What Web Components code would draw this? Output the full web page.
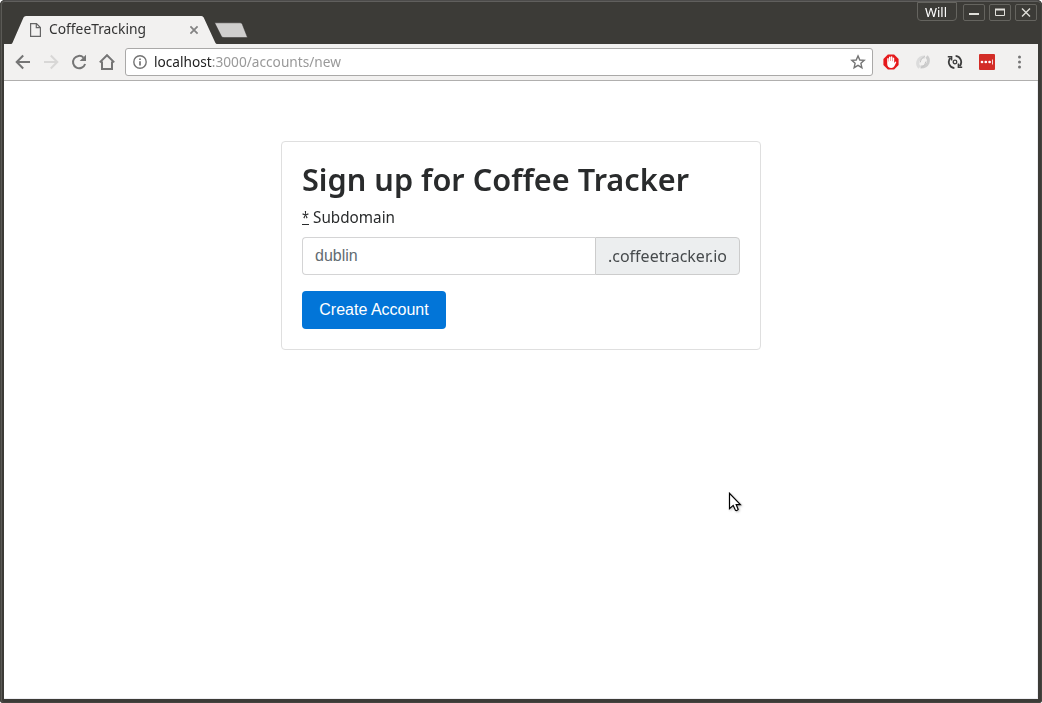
<!DOCTYPE html>
<html lang="en">
<head>
<meta charset="utf-8">
<title>CoffeeTracking</title>
<style>
html,body{margin:0;height:100%;overflow:hidden;background:#fff}
body{font-family:"Noto Sans","Open Sans",sans-serif;color:#292b2c}
</style>
</head>
<body>
<browser-window>
  <window-titlebar slot="top"></window-titlebar>
  <browser-toolbar slot="top"></browser-toolbar>
  <signup-card>
    <fit-text slot="title" width="387">Sign up for Coffee Tracker</fit-text>
  </signup-card>
</browser-window>
<mouse-pointer></mouse-pointer>
<script>
const define = (name, html, setup) => customElements.define(name, class extends HTMLElement {
  constructor() {
    super();
    this.attachShadow({mode: 'open'}).innerHTML = html;
  }
  connectedCallback() { if (setup) setup(this); }
});

define('browser-window', `<style>
:host{display:flex;flex-direction:column;box-sizing:border-box;width:1042px;height:703px;background:#3c3b37;padding:0 4px 4px;border-radius:5px 5px 3px 3px;overflow:hidden;position:relative}
:host::after{content:"";position:absolute;inset:0;border:1px solid #454440;border-top-color:#4c4b4a;border-radius:5px 5px 3px 3px;box-shadow:inset 1px 0 #5b5a56,inset 0 1px #605f5d;pointer-events:none}
main{flex:1;background:#fff;display:flex;justify-content:center;align-items:flex-start;padding-top:60px;box-shadow:inset 0 -1px #eeeef2,inset -1px 0 #eeeef2}
</style><slot name="top"></slot><main><slot></slot></main>`);

define('window-titlebar', `<style>
:host{display:flex;height:44px;background:#3c3b37;margin:0 -4px;padding:0 4px}
.tab{display:flex;align-items:center;position:relative;width:206px;height:28px;margin:16px 0 0 7px;color:#333;font-size:14px}
.tab>svg.bg{position:absolute;left:0;top:0;z-index:0}
.tab>*{position:relative}
.doc{margin-left:19px;flex:none}
.name{margin-left:8px;line-height:26px;margin-top:-3px}
.x{margin-left:43px;flex:none}
.new{margin:22px 0 0 -4px}
.controls{margin-left:auto;display:flex;margin-right:1px}
.user{box-sizing:border-box;width:40px;height:19px;margin-top:2px;border:1px solid #65645f;border-radius:0 0 4px 4px;text-align:center;font-size:13px;line-height:18px;color:#fff;margin-right:6px;padding-right:2px}
.b{box-sizing:border-box;width:22px;height:17px;border:1px solid #65645f;border-radius:2px;margin-top:4px;margin-right:4px;display:flex}
.b:last-child{margin-right:0}
</style>
<div class="tab">
<svg class="bg" width="206" height="28"><path d="M0 28 Q1 28 1.4 27 L12.5 1.5 Q13.2 0 15 0 H190.5 Q192 0 192.7 1.5 L204.2 26.5 Q205 28 206 28Z" fill="#f2f1f0"/></svg>
<svg class="doc" width="11" height="14" fill="none" stroke="#666" stroke-width="1.2"><path d="M.6 .6H6.5L10.4 4.5V13.4H.6ZM6.3 .6V4.7H10.4"/></svg>
<fit-text class="name" width="97">CoffeeTracking</fit-text>
<svg class="x" width="10" height="10" stroke="#838383" stroke-width="1.8"><path d="M1.4 1.4L8.6 8.6M8.6 1.4L1.4 8.6"/></svg>
</div>
<svg class="new" width="36" height="18"><path d="M1.6 .8H27Q28.7 .8 29.3 2.2L34.5 15.6H11Q9 15.6 8.4 14.2Z" fill="#cfcecd" stroke="#32312e" stroke-width=".5"/></svg>
<div class="controls"><div class="user"><fit-text width="22">Will</fit-text></div>
<div class="b"><svg width="20" height="15"><path d="M5 9H15" stroke="#e0dfda" stroke-width="2"/></svg></div>
<div class="b"><svg width="20" height="15"><path d="M5.5 4.5H14.5V10.5H5.5Z" fill="none" stroke="#e0dfda"/><path d="M5 4.5H15" stroke="#e0dfda" stroke-width="2"/></svg></div>
<div class="b"><svg width="20" height="15"><path d="M6 3.5L14 11.5M14 3.5L6 11.5" stroke="#e0dfda" stroke-width="1.4"/></svg></div></div>`);

define('browser-toolbar', `<style>
:host{display:flex;align-items:center;box-sizing:border-box;height:37px;background:#f2f1f0;border-bottom:1px solid #b0afae;padding-left:9px}
svg{display:block;flex:none;margin-right:8px}
.nav{display:flex;flex:none}
.box{box-sizing:border-box;flex:none;display:flex;align-items:center;width:748px;height:28px;border:1px solid #aaa9a8;border-radius:3px;background:#fff;font-size:14px;color:#999;padding-left:7px}
.box svg{margin-right:7px}
.box fit-text{line-height:24px;margin-top:-1px}
b{font-weight:400;color:#222}
.box .star{margin:0 6px 0 auto}
.ext{display:flex;margin-left:10px}
.ext svg{margin-right:16px}
.ext svg:last-child{margin-right:0}
</style>
<div class="nav">
<svg width="20" height="20" viewBox="0 0 20 20" fill="none" stroke="#757575" stroke-width="2"><path d="M17 10H4M10.2 3.5L3.7 10L10.2 16.5"/></svg>
<svg width="20" height="20" viewBox="0 0 20 20" fill="none" stroke="#d8d7d6" stroke-width="2"><path d="M3 10H16M9.8 3.5L16.3 10L9.8 16.5"/></svg>
<svg width="20" height="20" viewBox="0 0 20 20"><path d="M16.1 12A6.2 6.2 0 1 1 14.5 5.6" fill="none" stroke="#757575" stroke-width="2"/><path d="M17 2.7V9H10.7Z" fill="#757575"/></svg>
<svg width="20" height="20" viewBox="0 0 20 20" fill="none" stroke="#757575" stroke-width="2"><path d="M2.8 10.4L10 3.2L17.2 10.4M5 9.5V17H15V9.5"/></svg>
</div>
<div class="box">
<svg width="14" height="14"><circle cx="7" cy="7" r="6.2" fill="none" stroke="#737373" stroke-width="1.4"/><path d="M7 6.2V10.5M7 3.4V5" stroke="#737373" stroke-width="1.7"/></svg>
<fit-text width="187"><b>localhost</b>:3000/accounts/new</fit-text>
<svg class="star" width="16" height="16" viewBox="0 0 16 16"><path d="M8 1.9L9.8 6 14.2 6.4 10.9 9.3 11.9 13.7 8 11.4 4.1 13.7 5.1 9.3 1.8 6.4 6.2 6Z" fill="none" stroke="#757575" stroke-width="1.4"/></svg>
</div>
<div class="ext">
<svg width="16" height="16"><path d="M4.9 .4H11.1L15.6 4.9V11.1L11.1 15.6H4.9L.4 11.1V4.9Z" fill="#e5191b"/><path d="M4.2 8V4.5Q5 3.6 5.7 4.4V7.5H6V3Q6.8 2 7.5 3V7H7.9V2.6Q8.8 1.8 9.4 2.8V7.3H9.8V3.8Q10.6 3 11.2 4V9L12.2 7.8Q13.3 7.2 13.2 8.5L11.5 12Q10.5 14 8.4 14Q4.4 14 4.2 10Z" fill="#fff"/></svg>
<svg width="16" height="16" fill="none" stroke-width="3"><path d="M10 3Q4.5 3 2.9 7.5Q1.8 11 4.5 13.6" stroke="#dcdcdc"/><path d="M5.5 13Q11 13.2 13 8.8Q14.2 5 11.6 2.4" stroke="#cdcdcd"/><path d="M9.8 2.2Q5.2 4.6 5.2 8.4M6.2 13.8Q10.8 11.4 10.8 7.6" stroke="#c4c4c4" stroke-width="1"/></svg>
<svg width="16" height="16" fill="none" stroke="#3c3c3c" stroke-width="1.8"><path d="M7.4 14.2A6.2 6.2 0 0 1 3.4 3.9M8.6 1.8A6.2 6.2 0 0 1 12.6 12.1"/><path d="M.8 2.8H4.6V6.6M15.2 13.2H11.4V9.4" stroke-width="1.5"/><circle cx="8" cy="8" r="1.8" stroke-width="1.3"/></svg>
<svg width="16" height="16"><rect width="16" height="16" rx="1" fill="#d32d27"/><g fill="#fff"><circle cx="3" cy="8" r="1.35"/><circle cx="6.8" cy="8" r="1.35"/><circle cx="10.6" cy="8" r="1.35"/><path d="M13 5.4H14V10.6H13Z" opacity=".8"/></g></svg>
<svg width="16" height="16" fill="#757575"><circle cx="8.5" cy="3" r="1.5"/><circle cx="8.5" cy="8" r="1.5"/><circle cx="8.5" cy="13" r="1.5"/></svg>
</div>`);

define('signup-card', `<style>
:host{display:block;box-sizing:border-box;width:480px;height:209px;border:1px solid #dfdfdf;border-radius:4px;padding:20px;font-size:16px;background:#fff}
h1{margin:0;font-size:31px;font-weight:600;line-height:35px;height:35px}
label{display:flex;gap:4px;height:24px;line-height:24px;margin:8px 0}
i{font-style:normal;width:7px;height:20px;border-bottom:1px solid #292b2c;box-sizing:border-box}
.group{display:flex;height:38px}
.field{box-sizing:border-box;flex:1;border:1px solid #d4d4d5;border-right:0;border-radius:4px 0 0 4px;padding-left:12px;line-height:36px;font-family:"Liberation Sans",sans-serif;color:#636c72}
.addon{box-sizing:border-box;width:145px;border:1px solid #ccc;border-radius:0 4px 4px 0;background:#eceeef;padding-left:12px;line-height:36px;color:#464a4c}
button{display:block;width:144px;height:38px;margin:16px 0 0;padding:0;border:0;border-radius:4px;background:#0275d8;color:#fff;font:16px/38px "Liberation Sans",sans-serif}
</style>
<h1><slot name="title"></slot></h1>
<label><i><fit-text width="7">*</fit-text></i><fit-text width="82">Subdomain</fit-text></label>
<div class="group"><div class="field">dublin</div><div class="addon"><fit-text width="119">.coffeetracker.io</fit-text></div></div>
<button>Create Account</button>`);

define('mouse-pointer', `<style>
:host{position:absolute;left:728px;top:492px;filter:drop-shadow(1px 1px 1px #0004)}
svg{display:block}
</style><svg width="15" height="22"><path d="M1.5 1.3V16.6L5.2 13.4L7.4 18.2Q8.8 19.2 10.2 17.4L8.2 12.6H12.4Z" fill="#fff" stroke="#000" stroke-width="1.2"/></svg>`);

/* Condenses or widens its text to a fixed measure. Defined last, so that the
   fonts inherited from the other elements are in place when it measures. */
define('fit-text', `<style>
:host{display:inline-block;white-space:nowrap}
span{display:inline-block;transform-origin:0 50%}
</style><span><slot></slot></span>`, el => {
  const w = +el.getAttribute('width');
  const span = el.shadowRoot.querySelector('span');
  el.style.width = w + 'px';
  span.style.transform = 'none';
  span.style.transform = 'scaleX(' + w / span.getBoundingClientRect().width + ')';
});
</script>
</body>
</html>
